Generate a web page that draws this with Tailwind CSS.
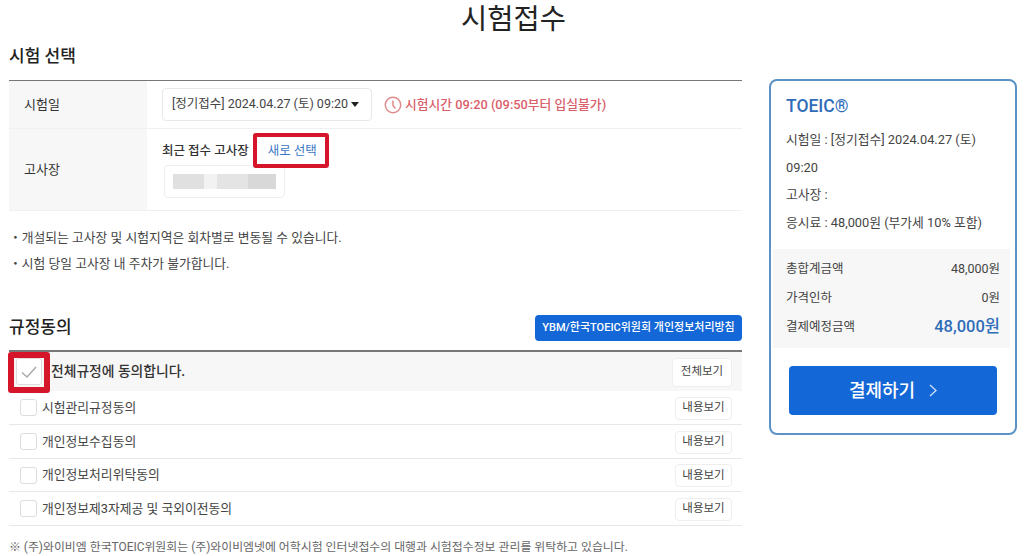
<!DOCTYPE html>
<html lang="ko">
<head>
    <meta charset="UTF-8">
    <meta name="viewport" content="width=device-width, initial-scale=1.0">
    <title>시험접수</title>
    <script src="https://cdn.jsdelivr.net/npm/@tailwindcss/browser@4"></script>
</head>
<body class="bg-white overflow-hidden font-['Roboto','Noto_Sans_CJK_KR',sans-serif] text-[#333]">
    <div class="relative w-[1024px] h-[556px] overflow-hidden">
        <h1 class="h-[40px] pl-[3px] text-center text-[28.5px] leading-[40px] text-[#222]">시험접수</h1>
        <div class="flex items-start pl-[9px]">
            <!-- left column -->
            <div class="w-[733px] shrink-0">
                <h2 class="h-[40px] pt-[4px] text-[17px] leading-[25px] font-medium text-[#222]">시험 선택</h2>
                <div class="border-t border-[#777]">
                    <div class="flex h-[48px] border-b border-[#f0f0f0]">
                        <div class="w-[138px] bg-[#f7f7f7] pl-[15px] flex items-center text-[13px]">시험일</div>
                        <div class="flex items-center pl-[15px]">
                            <div class="flex items-center w-[210px] h-[33px] border border-[#e8e8e8] rounded pl-[9px] text-[12.5px] text-[#444]">[정기접수] 2024.04.27 (토) 09:20<span class="ml-[3px] w-0 h-0 border-x-[4px] border-x-transparent border-t-[5px] border-t-[#222]"></span></div>
                            <svg class="ml-[12px]" width="18" height="18" viewBox="0 0 18 18" fill="none" stroke="#e08b8b" stroke-width="1.5"><circle cx="9" cy="9" r="7.7"/><path d="M9 4.5V9.5L11.5 12.5"/></svg>
                            <span class="ml-[3px] text-[12.8px] font-medium text-[#d9606a]">시험시간 09:20 (09:50부터 입실불가)</span>
                        </div>
                    </div>
                    <div class="flex h-[82px] border-b border-[#f0f0f0]">
                        <div class="w-[138px] bg-[#f7f7f7] pl-[15px] flex items-center text-[13px]">고사장</div>
                        <div class="pl-[15px] pt-[11px]">
                            <div class="flex items-center h-[22px]">
                                <span class="text-[12.5px] font-medium text-[#333]">최근 접수 고사장</span>
                                <a class="ml-[19px] text-[12.5px] text-[#3b78c4]">새로 선택</a>
                            </div>
                            <div class="mt-[3px] ml-[2px] flex items-center w-[121px] h-[33px] border border-[#eee] rounded pl-[8px]">
                                <div class="w-[31px] h-[15px] bg-[#e0e0e0]"></div>
                                <div class="w-[13px] h-[15px] bg-[#f2f2f2]"></div>
                                <div class="w-[31px] h-[15px] bg-[#e4e4e4]"></div>
                                <div class="w-[28px] h-[15px] bg-[#d8d8d8]"></div>
                            </div>
                        </div>
                    </div>
                </div>
                <ul class="mt-[14px] text-[12.8px] leading-[26px] text-[#444]">
                    <li>・개설되는 고사장 및 시험지역은 회차별로 변동될 수 있습니다.</li>
                    <li>・시험 당일 고사장 내 주차가 불가합니다.</li>
                </ul>
                <div class="mt-[37px] flex items-center justify-between h-[28px]">
                    <h2 class="text-[17px] font-medium text-[#222]">규정동의</h2>
                    <button class="w-[207px] h-[26px] bg-[#1467d6] rounded text-white text-[11px] font-medium">YBM/한국TOEIC위원회 개인정보처리방침</button>
                </div>
                <div class="mt-[8px] border-t-2 border-[#777]">
                    <div class="flex items-center justify-between h-[39px] bg-[#f7f7f7] pl-[7px] pr-[10px]">
                        <div class="flex items-center">
                            <span class="flex items-center justify-center w-[26px] h-[27px] bg-white border border-[#ddd] rounded-[3px]">
                                <svg width="18" height="14" viewBox="0 0 18 14" fill="none" stroke="#aaa" stroke-width="1.5"><path d="M2 7.5L7 12L16 2"/></svg>
                            </span>
                            <span class="ml-[9px] text-[13.8px] font-medium text-[#333]">전체규정에 동의합니다.</span>
                        </div>
                        <button class="mt-[1px] w-[60px] h-[29px] bg-white border border-[#eee] rounded text-[11.5px] text-[#444]">전체보기</button>
                    </div>
                    <div class="flex items-center justify-between h-[34px] border-b border-[#e8e8e8] pl-[11px] pr-[10px]">
                        <div class="flex items-center"><span class="w-[17px] h-[17px] border border-[#ddd] rounded-[3px]"></span><span class="ml-[5px] text-[12.8px] text-[#444]">시험관리규정동의</span></div>
                        <button class="mt-[1px] w-[57px] h-[23px] bg-white border border-[#eee] rounded text-[11.5px] text-[#444]">내용보기</button>
                    </div>
                    <div class="flex items-center justify-between h-[34px] border-b border-[#e8e8e8] pl-[11px] pr-[10px]">
                        <div class="flex items-center"><span class="w-[17px] h-[17px] border border-[#ddd] rounded-[3px]"></span><span class="ml-[5px] text-[12.8px] text-[#444]">개인정보수집동의</span></div>
                        <button class="mt-[1px] w-[57px] h-[23px] bg-white border border-[#eee] rounded text-[11.5px] text-[#444]">내용보기</button>
                    </div>
                    <div class="flex items-center justify-between h-[33px] border-b border-[#e8e8e8] pl-[11px] pr-[10px]">
                        <div class="flex items-center"><span class="w-[17px] h-[17px] border border-[#ddd] rounded-[3px]"></span><span class="ml-[5px] text-[12.8px] text-[#444]">개인정보처리위탁동의</span></div>
                        <button class="mt-[1px] w-[57px] h-[23px] bg-white border border-[#eee] rounded text-[11.5px] text-[#444]">내용보기</button>
                    </div>
                    <div class="flex items-center justify-between h-[34px] border-b border-[#e8e8e8] pl-[11px] pr-[10px]">
                        <div class="flex items-center"><span class="w-[17px] h-[17px] border border-[#ddd] rounded-[3px]"></span><span class="ml-[5px] text-[12.8px] text-[#444]">개인정보제3자제공 및 국외이전동의</span></div>
                        <button class="mt-[1px] w-[57px] h-[23px] bg-white border border-[#eee] rounded text-[11.5px] text-[#444]">내용보기</button>
                    </div>
                </div>
                <p class="mt-[12px] text-[11.9px] leading-[18px] text-[#666] whitespace-nowrap">※ (주)와이비엠 한국TOEIC위원회는 (주)와이비엠넷에 어학시험 인터넷접수의 대행과 시험접수정보 관리를 위탁하고 있습니다.</p>
            </div>
            <!-- summary card -->
            <div class="ml-[27px] mt-[39px] w-[248px] h-[356px] shrink-0 border-2 border-[#5b93c7] rounded-lg pt-[13px] pl-[2px] pr-[5px]">
                <div class="pl-[13px]">
                    <h3 class="text-[17.5px] leading-[24px] font-medium text-[#2f6cb8]">TOEIC®</h3>
                    <div class="mt-[8px] text-[12.8px] leading-[27.7px] text-[#444]">
                        <p>시험일 : [정기접수] 2024.04.27 (토)</p>
                        <p>09:20</p>
                        <p>고사장 :</p>
                        <p>응시료 : 48,000원 (부가세 10% 포함)</p>
                    </div>
                </div>
                <div class="mt-[12px] h-[99px] bg-[#f7f7f7] pl-[13px] pr-[10px] pt-[6px] text-[12.5px] text-[#444]">
                    <div class="flex items-center justify-between h-[29px]"><span>총합계금액</span><span>48,000원</span></div>
                    <div class="flex items-center justify-between h-[29px]"><span>가격인하</span><span>0원</span></div>
                    <div class="flex items-center justify-between h-[29px]"><span>결제예정금액</span><span class="text-[16.5px] font-medium text-[#2f6cb8]">48,000원</span></div>
                </div>
                <button class="mt-[18px] ml-[16px] flex items-center justify-center w-[208px] h-[49px] bg-[#1467d6] rounded text-white text-[18px] font-medium">결제하기
                    <svg class="ml-[14px]" width="8" height="13" viewBox="0 0 8 13" fill="none" stroke="#cfe0f7" stroke-width="1.3"><path d="M1 1L7 6.5L1 12"/></svg>
                </button>
            </div>
        </div>
        <!-- red annotation boxes -->
        <div class="absolute left-[253px] top-[133px] w-[76px] h-[35px] border-[4px] border-[#d5152a] rounded-[3px]"></div>
        <div class="absolute left-[8px] top-[352px] w-[42px] h-[41px] border-[6px] border-[#d5152a] rounded-[3px]"></div>
    </div>
</body>
</html>
